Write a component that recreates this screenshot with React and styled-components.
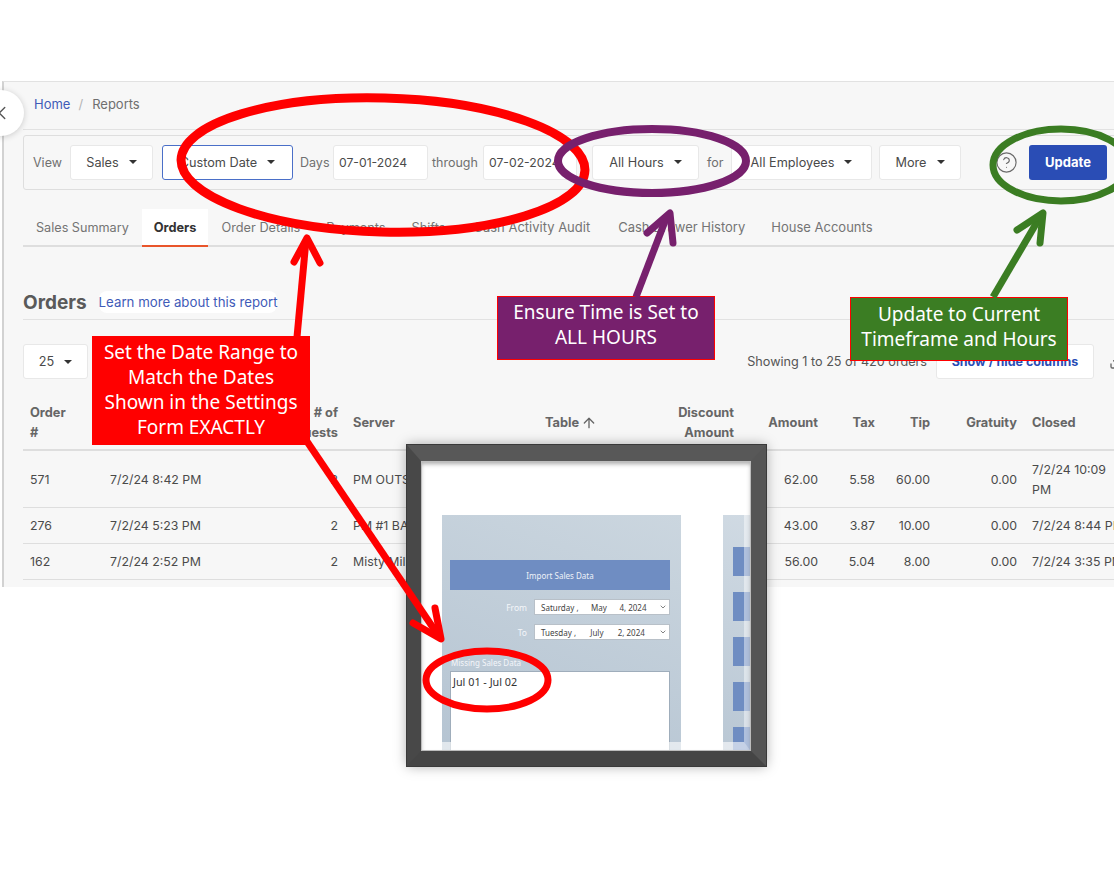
import React from "react";
import styled, { createGlobalStyle } from "styled-components";
import { ArrowUp, ChevronLeft, ChevronDown, Download, CircleHelp } from "lucide-react";

const Global = createGlobalStyle`
  html, body { margin: 0; padding: 0; background: #fff; }
  * { box-sizing: border-box; }
  body { font-family: "Inter", "Noto Sans", sans-serif; }
`;

const Page = styled.div`
  position: relative;
  width: 1114px;
  height: 883px;
  overflow: hidden;
  background: #fff;
  padding-top: 81px;
`;
const Panel = styled.main`
  margin-left: 2px;
  height: 506px;
  background: #f7f7f7;
  border-top: 1px solid #e2e2e2;
  border-left: 2px solid #d2d2d2;
  padding-left: 19px;
  overflow: hidden;
`;
const Content = styled.div`
  width: 1102px;
  color: #555;
  font-size: 12.75px;
`;
const Crumbs = styled.nav`
  height: 48px;
  display: flex;
  align-items: center;
  gap: 8px;
  padding-left: 11px;
  padding-bottom: 4px;
  border-bottom: 1px solid #e2e2e2;
  font-size: 13px;
  color: #6f6f6f;
`;
const Link = styled.a`
  color: #3f5bb8;
`;
const Sep = styled.span`
  color: #b5b5b5;
  margin-right: 1px;
`;
const FilterBar = styled.section`
  margin-top: 5px;
  height: 55px;
  display: flex;
  align-items: center;
  padding-left: 9px;
  padding-bottom: 1px;
  border: 1px solid #dedede;
  border-radius: 3px;
`;
const Label = styled.span`
  width: ${(p) => p.$w}px;
  margin-left: ${(p) => p.$ml || 0}px;
  flex: none;
  color: #707070;
  font-size: 12.5px;
  white-space: nowrap;
`;
const Select = styled.div`
  width: ${(p) => p.$w}px;
  height: 35px;
  margin-left: ${(p) => p.$ml || 0}px;
  flex: none;
  display: flex;
  align-items: center;
  justify-content: center;
  gap: 10px;
  background: #fff;
  border: 1px solid ${(p) => (p.$active ? "#4a6fc8" : "#e8e8e8")};
  border-radius: 3px;
  color: #4a4a4a;
  font-size: 12.7px;
  white-space: nowrap;
`;
const Caret = styled.i`
  width: 0;
  height: 0;
  border-left: 4.5px solid transparent;
  border-right: 4.5px solid transparent;
  border-top: 4.5px solid #333;
`;
const DateInput = styled.div`
  width: ${(p) => p.$w}px;
  height: 35px;
  margin-left: ${(p) => p.$ml}px;
  flex: none;
  display: flex;
  align-items: center;
  padding-left: 5px;
  background: #fff;
  border: 1px solid #e8e8e8;
  border-radius: 3px;
  color: #4a4a4a;
  font-size: 12.2px;
`;
const Help = styled.span`
  display: flex;
  margin-left: 34px;
  color: #6a6a6a;
`;
const UpdateButton = styled.button`
  width: 78px;
  height: 35px;
  margin-left: 11px;
  flex: none;
  background: #2a4db5;
  border: 0;
  border-radius: 3px;
  color: #fff;
  font: 700 13px "Inter", sans-serif;
`;
const Tabs = styled.div`
  margin-top: 19px;
  height: 38px;
  display: flex;
  border-bottom: 2px solid #dedede;
`;
const Tab = styled.div`
  height: 38px;
  display: flex;
  align-items: center;
  padding: 0 ${(p) => p.$pr || (p.$active ? 12 : 13)}px 0 ${(p) => (p.$active ? 12 : 13)}px;
  font-size: ${(p) => p.$size || 12.75}px;
  font-weight: ${(p) => (p.$active ? 700 : 400)};
  color: ${(p) => (p.$active ? "#333" : "#747474")};
  background: ${(p) => (p.$active ? "#fff" : "transparent")};
  border-bottom: 2px solid ${(p) => (p.$active ? "#e9552b" : "transparent")};
  white-space: nowrap;
`;
const Heading = styled.header`
  margin-top: 43px;
  height: 30px;
  display: flex;
  align-items: center;
  gap: 12px;
  border-bottom: 1px solid #e2e2e2;
  padding-bottom: 5px;
`;
const Title = styled.h2`
  margin: 0;
  font-size: 19px;
  font-weight: 700;
  color: #5a5a5a;
`;
const Learn = styled.a`
  padding: 3px 0;
  background: #fff;
  border-radius: 8px;
  color: #3f5bb8;
  font-size: 13.25px;
`;
const Toolbar = styled.div`
  margin-top: 24px;
  height: 35px;
  display: flex;
  align-items: center;
`;
const Showing = styled.span`
  margin-left: auto;
  color: #555;
  font-size: 12.65px;
`;
const ColumnsButton = styled.button`
  width: 158px;
  height: 35px;
  margin-left: 9px;
  background: #fff;
  border: 1px solid #e8e8e8;
  border-radius: 3px;
  color: #2a4db5;
  font: 700 12.5px "Inter", sans-serif;
`;
const DownloadIcon = styled.span`
  display: flex;
  margin-left: 15px;
  color: #666;
`;
const Table = styled.table`
  margin-top: 16px;
  width: 1102px;
  table-layout: fixed;
  border-collapse: collapse;
`;
const Th = styled.th`
  width: ${(p) => p.$w}px;
  height: 55px;
  padding: 2px 7px 0 8px;
  text-align: ${(p) => p.$align || "left"};
  font-size: 12.8px;
  font-weight: 700;
  line-height: 20px;
  color: #666;
  border-bottom: 2px solid #dedede;
  &:first-child {
    padding-left: 7px;
  }
`;
const SortLabel = styled.span`
  display: inline-flex;
  align-items: center;
  gap: 2px;
`;
const Row = styled.tr`
  height: ${(p) => p.$h || 36}px;
  border-bottom: 1px solid #dedede;
`;
const Td = styled.td`
  padding: 2px 7px 0 8px;
  text-align: ${(p) => p.$align || "left"};
  font-size: 12.35px;
  line-height: 20px;
  color: #4a4a4a;
  white-space: ${(p) => (p.$wrap ? "normal" : "nowrap")};
  &:first-child {
    padding-left: 7px;
  }
`;

const BackButton = styled.div`
  position: absolute;
  left: -22px;
  top: 90px;
  width: 46px;
  height: 46px;
  display: flex;
  align-items: center;
  justify-content: flex-end;
  padding-right: 11px;
  background: #fff;
  border-radius: 50%;
  box-shadow: 0 1px 6px rgba(0, 0, 0, 0.18);
  color: #555;
`;
const Ink = styled.svg`
  position: absolute;
  left: 0;
  top: 0;
  z-index: ${(p) => p.$z};
  pointer-events: none;
`;
const Callout = styled.div`
  position: absolute;
  left: ${(p) => p.$x}px;
  top: ${(p) => p.$y}px;
  width: ${(p) => p.$w}px;
  height: ${(p) => p.$h}px;
  z-index: 3;
  display: flex;
  align-items: center;
  justify-content: center;
  padding-bottom: ${(p) => p.$pb}px;
  text-align: center;
  background: ${(p) => p.$bg};
  border: 1px solid #f00;
  color: #fff;
  font-family: "Noto Sans", sans-serif;
  font-size: 19px;
  line-height: 25px;
`;
const Frame = styled.figure`
  position: absolute;
  left: 407px;
  top: 445px;
  width: 359px;
  height: 321px;
  z-index: 2;
  margin: 0;
  border-style: solid;
  border-width: 16px 15px 15px 14px;
  border-color: #585858 #555 #454545 #484848;
  box-shadow: 0 0 0 1px #3a3a3a, 0 0 12px rgba(0, 0, 0, 0.35);
`;
const Mat = styled.div`
  position: relative;
  width: 100%;
  height: 100%;
  display: flex;
  gap: 42px;
  padding: 53px 0 0 20px;
  background: #fff;
  border: 1px solid #bdbdbd;
  overflow: hidden;
  &::before {
    content: "";
    position: absolute;
    inset: 0;
    z-index: 1;
    box-shadow: inset 0 3px 4px -1px rgba(90, 90, 90, 0.5);
  }
  &::after {
    content: "";
    position: absolute;
    inset: 0;
    border-style: solid;
    border-width: 8px 6px 8px 6px;
    border-color: rgba(255, 255, 255, 0.9) rgba(255, 255, 255, 0.45) rgba(255, 255, 255, 0.6) rgba(255, 255, 255, 0.8);
  }
`;
const FormPane = styled.div`
  width: 239px;
  height: 240px;
  flex: none;
  overflow: hidden;
  padding: 45px 11px 0 8px;
  background: linear-gradient(200deg, #cbd6df 0%, #b5c4d2 100%);
`;
const FormTitle = styled.div`
  height: 30px;
  display: flex;
  align-items: center;
  justify-content: center;
  background: #6f8dc2;
  color: #eef2f8;
  font: 8px "Noto Sans", sans-serif;
`;
const DateRow = styled.div`
  margin-top: 9px;
  display: flex;
  align-items: center;
  justify-content: flex-end;
  gap: 7px;
`;
const DateLabel = styled.span`
  color: #f4f6fa;
  font: 8.5px "Noto Sans", sans-serif;
`;
const DatePick = styled.div`
  width: 136px;
  height: 16px;
  display: flex;
  align-items: center;
  justify-content: space-between;
  padding: 0 2px 0 6px;
  background: #fff;
  border: 1px solid #b8c0c8;
  color: #444;
  font: 8px "Noto Sans", sans-serif;
`;
const MissingLabel = styled.div`
  margin: 17px 0 3px 1px;
  color: #f4f6fa;
  font: 8px "Noto Sans", sans-serif;
`;
const MissingBox = styled.div`
  height: 90px;
  padding: 2px;
  background: #fff;
  border: 1px solid #9fadbb;
  color: #333;
  font: 10.8px "Noto Sans", sans-serif;
`;
const SidePane = styled.div`
  width: 28px;
  height: 240px;
  flex: none;
  display: flex;
  flex-direction: column;
  gap: 16px;
  padding: 32px 0 0 10px;
  background: linear-gradient(200deg, #d0dae3 0%, #b9c7d4 100%);
`;
const SideBlock = styled.div`
  height: 29px;
  flex: none;
  background: #6f8dc2;
`;

const rows = [
  { id: 571, date: "7/2/24 8:42 PM", guests: 2, server: "PM OUTSIDE", amount: "62.00", tax: "5.58", tip: "60.00", closed: "7/2/24 10:09 PM", h: 57 },
  { id: 276, date: "7/2/24 5:23 PM", guests: 2, server: "PM #1 BAR", amount: "43.00", tax: "3.87", tip: "10.00", closed: "7/2/24 8:44 PM" },
  { id: 162, date: "7/2/24 2:52 PM", guests: 2, server: "Misty Miller", amount: "56.00", tax: "5.04", tip: "8.00", closed: "7/2/24 3:35 PM" },
];
const tabs = [
  { label: "Sales Summary", size: 12.65 },
  { label: "Orders", active: true },
  { label: "Order Details" },
  { label: "Payments" },
  { label: "Shifts", pr: 15 },
  { label: "Cash Activity Audit", size: 13, pr: 15 },
  { label: "Cash Drawer History", size: 13 },
  { label: "House Accounts", size: 13 },
];

const Arrow = ({ color, line, head }) => (
  <g fill="none" stroke={color} strokeWidth="7" strokeLinecap="round" strokeLinejoin="round">
    <path d={line} strokeLinecap="butt" />
    <path d={head} />
  </g>
);

export default function App() {
  return (
    <Page>
      <Global />
      <Panel>
        <Content>
          <Crumbs>
            <Link>Home</Link>
            <Sep>/</Sep>
            <span>Reports</span>
          </Crumbs>
          <FilterBar>
            <Label $w={30}>View</Label>
            <Select $w={83} $ml={7}>Sales<Caret /></Select>
            <Select $w={131} $ml={9} $active>Custom Date<Caret /></Select>
            <Label $w={29} $ml={7}>Days</Label>
            <DateInput $w={95} $ml={4}>07-01-2024</DateInput>
            <Label $w={48} $ml={4}>through</Label>
            <DateInput $w={94} $ml={3}>07-02-2024</DateInput>
            <Select $w={107} $ml={15}>All Hours<Caret /></Select>
            <Label $w={17} $ml={8}>for</Label>
            <Select $w={141} $ml={7}>All Employees<Caret /></Select>
            <Select $w={82} $ml={7}>More<Caret /></Select>
            <Help><CircleHelp size={23} strokeWidth={1.2} /></Help>
            <UpdateButton>Update</UpdateButton>
          </FilterBar>
          <Tabs>
            {tabs.map((t) => (
              <Tab key={t.label} $active={t.active} $size={t.size} $pr={t.pr}>{t.label}</Tab>
            ))}
          </Tabs>
          <Heading>
            <Title>Orders</Title>
            <Learn>Learn more about this report</Learn>
          </Heading>
          <Toolbar>
            <Select $w={65}>25<Caret /></Select>
            <Showing>Showing 1 to 25 of 420 orders</Showing>
            <ColumnsButton>Show / hide columns</ColumnsButton>
            <DownloadIcon><Download size={16} /></DownloadIcon>
          </Toolbar>
          <Table>
            <thead>
              <tr>
                <Th $w={79}>Order<br />#</Th>
                <Th $w={178}>Date</Th>
                <Th $w={65} $align="right"># of Guests</Th>
                <Th $w={192}>Server</Th>
                <Th $w={66}><SortLabel>Table<ArrowUp size={16} /></SortLabel></Th>
                <Th $w={138} $align="right">Discount<br />Amount</Th>
                <Th $w={84} $align="right">Amount</Th>
                <Th $w={57} $align="right">Tax</Th>
                <Th $w={55} $align="right">Tip</Th>
                <Th $w={87} $align="right">Gratuity</Th>
                <Th $w={101}>Closed</Th>
              </tr>
            </thead>
            <tbody>
              {rows.map((r) => (
                <Row key={r.id} $h={r.h}>
                  <Td>{r.id}</Td>
                  <Td>{r.date}</Td>
                  <Td $align="right">{r.guests}</Td>
                  <Td>{r.server}</Td>
                  <Td></Td>
                  <Td $align="right">0.00</Td>
                  <Td $align="right">{r.amount}</Td>
                  <Td $align="right">{r.tax}</Td>
                  <Td $align="right">{r.tip}</Td>
                  <Td $align="right">0.00</Td>
                  <Td $wrap={r.h ? true : undefined}>{r.closed}</Td>
                </Row>
              ))}
            </tbody>
          </Table>
        </Content>
      </Panel>

      <BackButton><ChevronLeft size={22} strokeWidth={1.5} /></BackButton>

      <Frame>
        <Mat>
          <FormPane>
            <FormTitle>Import Sales Data</FormTitle>
            <DateRow>
              <DateLabel>From</DateLabel>
              <DatePick><span>Saturday ,</span><span>May</span><span>4, 2024</span><ChevronDown size={8} /></DatePick>
            </DateRow>
            <DateRow>
              <DateLabel>To</DateLabel>
              <DatePick><span>Tuesday ,</span><span>July</span><span>2, 2024</span><ChevronDown size={8} /></DatePick>
            </DateRow>
            <MissingLabel>Missing Sales Data</MissingLabel>
            <MissingBox>Jul 01 - Jul 02</MissingBox>
          </FormPane>
          <SidePane>
            <SideBlock /><SideBlock /><SideBlock /><SideBlock /><SideBlock />
          </SidePane>
        </Mat>
      </Frame>

      <Callout $x={92} $y={336} $w={218} $h={109} $bg="#ff0000" $pb={2}>
        <span>Set the Date Range to<br />Match the Dates<br />Shown in the Settings<br />Form EXACTLY</span>
      </Callout>
      <Callout $x={497} $y={296} $w={218} $h={64} $bg="#77206d" $pb={6}>
        <span>Ensure Time is Set to<br />ALL HOURS</span>
      </Callout>
      <Callout $x={850} $y={297} $w={218} $h={64} $bg="#3b7d23" $pb={4}>
        <span>Update to Current<br />Timeframe and Hours</span>
      </Callout>

      <Ink $z={4} width="1114" height="883" viewBox="0 0 1114 883">
        <ellipse cx="383" cy="165" rx="202" ry="67" fill="none" stroke="#f00" strokeWidth="9" transform="rotate(1.5 383 165)" />
        <ellipse cx="652" cy="161" rx="94" ry="32" fill="none" stroke="#77206d" strokeWidth="8" />
        <ellipse cx="1061" cy="165" rx="68" ry="36" fill="none" stroke="#3b7d23" strokeWidth="7" />
        <ellipse cx="487" cy="680" rx="61" ry="29" fill="none" stroke="#f00" strokeWidth="7" />
        <Arrow color="#f00" line="M297 337 L306 240" head="M294 262 L307 238 L320 263" />
        <Arrow color="#77206d" line="M636 297 L667 216" head="M647 233 L670 213 L673 243" />
        <Arrow color="#3b7d23" line="M993 297 L1040 217" head="M1017 230 L1043 213 L1040 243" />
        <Arrow color="#f00" line="M306 440 L438 635" head="M435 608 L441 639 L413 623" />
      </Ink>
    </Page>
  );
}
